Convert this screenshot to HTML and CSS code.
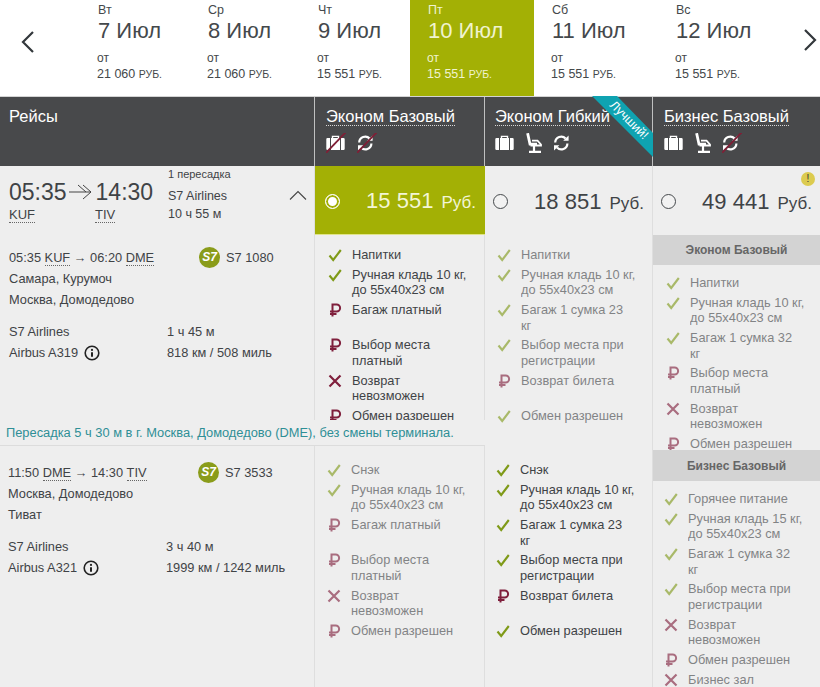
FILE: index.html
```html
<!DOCTYPE html>
<html lang="ru">
<head>
<meta charset="utf-8">
<title>Рейсы</title>
<link rel="stylesheet" href="styles.css">
</head>
<body>
<svg class="defs" aria-hidden="true">
  <defs>
    <symbol id="check" viewBox="0 0 14 14"><path d="M1.5 7.5 5.2 12 12.8 2" fill="none" stroke="currentColor" stroke-width="2.1"/></symbol>
    <symbol id="rub" viewBox="0 0 14 14"><path d="M4.5 13.5V1.5H8.6a3.5 3.5 0 0 1 0 7H2M2 11H8.5" fill="none" stroke="currentColor" stroke-width="2"/></symbol>
    <symbol id="cross" viewBox="0 0 14 14"><path d="M1.5 1.5 12.5 12.5M12.5 1.5 1.5 12.5" fill="none" stroke="currentColor" stroke-width="2.2"/></symbol>
    <symbol id="bag" viewBox="0 0 20 20"><path d="M6.5 5V3.4h6V5" fill="none" stroke="#fff" stroke-width="1.4"/><path d="M1.5 5H4V17H1.5A1.2 1.2 0 0 1 .3 15.8V6.2A1.2 1.2 0 0 1 1.5 5ZM5 5H14V17H5ZM15 5H17.5A1.2 1.2 0 0 1 18.7 6.2V15.8A1.2 1.2 0 0 1 17.5 17H15Z" fill="#fff"/></symbol>
    <symbol id="seat" viewBox="0 0 20 20"><path d="M3.6 .2 6 11.2H13" fill="none" stroke="#fff" stroke-width="2.8"/><path d="M8 7.6H13.5L17 11.5V12.5H6.5" fill="none" stroke="#fff" stroke-width="1.8"/><path d="M10 13V18M5 18.8H17" fill="none" stroke="#fff" stroke-width="2.2"/></symbol>
    <symbol id="sync" viewBox="0 0 20 20"><path d="M2.2 9.5A6 6 0 0 1 12.6 5.6M14.4 10.5A6 6 0 0 1 4 14.4" fill="none" stroke="#fff" stroke-width="2.2"/><path d="M10.2 7.8H15.6V2.6ZM6.4 12.2H1V17.4Z" fill="#fff"/></symbol>
    <symbol id="strike" viewBox="0 0 20 20"><path d="M-2 22 20-1" stroke="#7f1f36" stroke-width="1.8"/></symbol>
    <symbol id="info" viewBox="0 0 16 16"><circle cx="8" cy="8" r="6.8" fill="none" stroke="#222" stroke-width="1.6"/><circle cx="8" cy="4.9" r="1.1" fill="#222"/><path d="M8 7.2V11.8" stroke="#222" stroke-width="2"/></symbol>
  </defs>
</svg>

<nav class="dates">
  <div class="nav-prev"><svg width="14" height="24" viewBox="0 0 14 24"><path d="M12 2 2 12 12 22" fill="none" stroke="#33383c" stroke-width="2.2"/></svg></div>
  <div class="day"><div class="day-name">Вт</div><div class="day-date">7 Июл</div><div class="day-from">от</div><div class="day-price">21 060 <small>РУБ.</small></div></div>
  <div class="day"><div class="day-name">Ср</div><div class="day-date">8 Июл</div><div class="day-from">от</div><div class="day-price">21 060 <small>РУБ.</small></div></div>
  <div class="day"><div class="day-name">Чт</div><div class="day-date">9 Июл</div><div class="day-from">от</div><div class="day-price">15 551 <small>РУБ.</small></div></div>
  <div class="day day-wide day-active"><div class="day-name">Пт</div><div class="day-date">10 Июл</div><div class="day-from">от</div><div class="day-price">15 551 <small>РУБ.</small></div></div>
  <div class="day day-wide"><div class="day-name">Сб</div><div class="day-date">11 Июл</div><div class="day-from">от</div><div class="day-price">15 551 <small>РУБ.</small></div></div>
  <div class="day day-wide"><div class="day-name">Вс</div><div class="day-date">12 Июл</div><div class="day-from">от</div><div class="day-price">15 551 <small>РУБ.</small></div></div>
  <div class="nav-next"><svg width="14" height="24" viewBox="0 0 14 24"><path d="M2 2 12 12 2 22" fill="none" stroke="#33383c" stroke-width="2.2"/></svg></div>
</nav>

<main class="table">
  <div class="head head-flights">Рейсы</div>
  <div class="head">
    <span class="fare-title">Эконом Базовый</span>
    <div class="fare-icons">
      <svg class="ico"><use href="#bag"/><use href="#strike"/></svg>
      <svg class="ico ico-after-bag"><use href="#sync"/><use href="#strike"/></svg>
    </div>
  </div>
  <div class="head head-best">
    <span class="fare-title">Эконом Гибкий</span>
    <div class="fare-icons">
      <svg class="ico"><use href="#bag"/></svg>
      <svg class="ico"><use href="#seat"/></svg>
      <svg class="ico"><use href="#sync"/></svg>
    </div>
    <div class="ribbon"><span class="ribbon-text">Лучший!</span></div>
  </div>
  <div class="head head-last">
    <span class="fare-title">Бизнес Базовый</span>
    <div class="fare-icons">
      <svg class="ico"><use href="#bag"/></svg>
      <svg class="ico"><use href="#seat"/></svg>
      <svg class="ico"><use href="#sync"/><use href="#strike"/></svg>
    </div>
  </div>

  <div class="summary cell">
    <div class="times">
      <div class="times-row"><span>05:35</span>
        <svg class="time-arrow" width="24" height="16" viewBox="0 0 24 16"><path d="M0 8H22M14 1 22 8 14 15M9 1 17 8" fill="none" stroke="#444" stroke-width="1"/></svg>
        <span>14:30</span></div>
      <div class="codes"><span class="code code-from">KUF</span><span class="code">TIV</span></div>
    </div>
    <div class="summary-info">
      <div class="stops">1 пересадка</div>
      <div class="summary-line">S7 Airlines</div>
      <div class="summary-line">10 ч 55 м</div>
    </div>
    <svg class="chevron" width="18" height="10" viewBox="0 0 18 10"><path d="M1 9.5 9 1.5 17 9.5" fill="none" stroke="#444" stroke-width="1.1"/></svg>
  </div>
  <div class="price price-active"><span class="radio radio-on"></span><span class="amount">15 551 <small>Руб.</small></span></div>
  <div class="price cell"><span class="radio"></span><span class="amount">18 851 <small>Руб.</small></span></div>
  <div class="price price-last"><span class="radio"></span><span class="amount">49 441 <small>Руб.</small></span><span class="warn">!</span></div>

  <section class="segment area-seg-1 cell">
    <div class="seg-top"><div class="route">05:35 <span class="code">KUF</span> → 06:20 <span class="code">DME</span></div><span class="logo">S7</span><span>S7 1080</span></div>
    <div>Самара, Курумоч</div>
    <div>Москва, Домодедово</div>
    <div class="seg-meta">
      <div class="meta-col"><div>S7 Airlines</div><div class="plane">Airbus A319 <svg class="info"><use href="#info"/></svg></div></div>
      <div><div>1 ч 45 м</div><div>818 км / 508 миль</div></div>
    </div>
  </section>

  <ul class="feats area-f1a cell inset-37">
    <li class="feat"><svg class="mark ok"><use href="#check"/></svg><span>Напитки</span></li>
    <li class="feat"><svg class="mark ok"><use href="#check"/></svg><span>Ручная кладь 10 кг, до 55x40x23 см</span></li>
    <li class="feat tall"><svg class="mark bad"><use href="#rub"/></svg><span>Багаж платный</span></li>
    <li class="feat"><svg class="mark bad"><use href="#rub"/></svg><span>Выбор места платный</span></li>
    <li class="feat"><svg class="mark bad"><use href="#cross"/></svg><span>Возврат невозможен</span></li>
    <li class="feat"><svg class="mark bad"><use href="#rub"/></svg><span>Обмен разрешен</span></li>
  </ul>
  <ul class="feats area-f1b cell inset-36 dim">
    <li class="feat"><svg class="mark ok"><use href="#check"/></svg><span>Напитки</span></li>
    <li class="feat"><svg class="mark ok"><use href="#check"/></svg><span>Ручная кладь 10 кг, до 55x40x23 см</span></li>
    <li class="feat"><svg class="mark ok"><use href="#check"/></svg><span>Багаж 1 сумка 23 кг</span></li>
    <li class="feat"><svg class="mark ok"><use href="#check"/></svg><span>Выбор места при регистрации</span></li>
    <li class="feat tall"><svg class="mark bad"><use href="#rub"/></svg><span>Возврат билета</span></li>
    <li class="feat"><svg class="mark ok"><use href="#check"/></svg><span>Обмен разрешен</span></li>
  </ul>

  <aside class="fare-stack">
    <h3 class="stack-title">Эконом Базовый</h3>
    <ul class="feats stack-list inset-37 dim">
      <li class="feat"><svg class="mark ok"><use href="#check"/></svg><span>Напитки</span></li>
      <li class="feat"><svg class="mark ok"><use href="#check"/></svg><span>Ручная кладь 10 кг, до 55x40x23 см</span></li>
      <li class="feat"><svg class="mark ok"><use href="#check"/></svg><span>Багаж 1 сумка 32 кг</span></li>
      <li class="feat"><svg class="mark bad"><use href="#rub"/></svg><span>Выбор места платный</span></li>
      <li class="feat"><svg class="mark bad"><use href="#cross"/></svg><span>Возврат невозможен</span></li>
      <li class="feat"><svg class="mark bad"><use href="#rub"/></svg><span>Обмен разрешен</span></li>
    </ul>
    <h3 class="stack-title stack-title-2">Бизнес Базовый</h3>
    <ul class="feats stack-list-2 inset-35 dim">
      <li class="feat"><svg class="mark ok"><use href="#check"/></svg><span>Горячее питание</span></li>
      <li class="feat"><svg class="mark ok"><use href="#check"/></svg><span>Ручная кладь 15 кг, до 55x40x23 см</span></li>
      <li class="feat"><svg class="mark ok"><use href="#check"/></svg><span>Багаж 1 сумка 32 кг</span></li>
      <li class="feat"><svg class="mark ok"><use href="#check"/></svg><span>Выбор места при регистрации</span></li>
      <li class="feat"><svg class="mark bad"><use href="#cross"/></svg><span>Возврат невозможен</span></li>
      <li class="feat"><svg class="mark bad"><use href="#rub"/></svg><span>Обмен разрешен</span></li>
      <li class="feat"><svg class="mark bad"><use href="#cross"/></svg><span>Бизнес зал</span></li>
    </ul>
  </aside>

  <div class="transfer">Пересадка 5 ч 30 м в г. Москва, Домодедово (DME), без смены терминала.</div>

  <section class="segment segment-2 cell">
    <div class="seg-top"><div class="route">11:50 <span class="code">DME</span> → 14:30 <span class="code">TIV</span></div><span class="logo">S7</span><span>S7 3533</span></div>
    <div>Москва, Домодедово</div>
    <div>Тиват</div>
    <div class="seg-meta">
      <div class="meta-col"><div>S7 Airlines</div><div class="plane">Airbus A321 <svg class="info"><use href="#info"/></svg></div></div>
      <div><div>3 ч 40 м</div><div>1999 км / 1242 миль</div></div>
    </div>
  </section>
  <ul class="feats feats-2 area-f2a cell inset-36 dim">
    <li class="feat"><svg class="mark ok"><use href="#check"/></svg><span>Снэк</span></li>
    <li class="feat"><svg class="mark ok"><use href="#check"/></svg><span>Ручная кладь 10 кг, до 55x40x23 см</span></li>
    <li class="feat tall"><svg class="mark bad"><use href="#rub"/></svg><span>Багаж платный</span></li>
    <li class="feat"><svg class="mark bad"><use href="#rub"/></svg><span>Выбор места платный</span></li>
    <li class="feat"><svg class="mark bad"><use href="#cross"/></svg><span>Возврат невозможен</span></li>
    <li class="feat"><svg class="mark bad"><use href="#rub"/></svg><span>Обмен разрешен</span></li>
  </ul>
  <ul class="feats feats-2 area-f2b cell inset-35">
    <li class="feat"><svg class="mark ok"><use href="#check"/></svg><span>Снэк</span></li>
    <li class="feat"><svg class="mark ok"><use href="#check"/></svg><span>Ручная кладь 10 кг, до 55x40x23 см</span></li>
    <li class="feat"><svg class="mark ok"><use href="#check"/></svg><span>Багаж 1 сумка 23 кг</span></li>
    <li class="feat"><svg class="mark ok"><use href="#check"/></svg><span>Выбор места при регистрации</span></li>
    <li class="feat tall"><svg class="mark bad"><use href="#rub"/></svg><span>Возврат билета</span></li>
    <li class="feat"><svg class="mark ok"><use href="#check"/></svg><span>Обмен разрешен</span></li>
  </ul>
</main>
</body>
</html>
```

FILE: styles.css
```css
* { box-sizing: border-box; }

html, body {
  margin: 0;
  height: 687px;
  overflow: hidden;
}

body {
  background: #eeeeee;
  color: #3f4346;
  font-family: "Liberation Sans", Arial, sans-serif;
  font-size: 13px;
}

.defs { display: none; }

/* Date strip */
.dates {
  display: flex;
  height: 97px;
  background: #fff;
  border-bottom: 1px solid #d4d4d4;
}
.nav-prev {
  width: 80px;
  flex: none;
  padding: 30px 0 0 21px;
}
.nav-next {
  flex: 1;
  padding: 28px 0 0 21px;
}
.day {
  width: 110px;
  flex: none;
  padding: 3px 0 0 17px;
  color: #44484b;
}
.day-wide { width: 124px; }
.day-active { background: #a3b005; color: #f0f3cf; }
.day-name { font-size: 12.5px; line-height: 14px; padding-left: 1px; }
.day-date { font-size: 22px; line-height: 27px; padding-left: 1px; }
.day-from { font-size: 12px; line-height: 14px; margin-top: 7px; }
.day-price { font-size: 12.5px; line-height: 14px; margin-top: 2px; }
.day-price small { font-size: 10.5px; }

/* Table */
.table {
  display: grid;
  grid-template-columns: 315px 170px 168px 167px;
  grid-template-rows: 69px 69px 185px 26px 241px;
  height: 590px;
}
.cell { box-shadow: inset -1px 0 #dedede; }

.head {
  background: #48494b;
  color: #fff;
  padding: 10px 0 0 11px;
  font-size: 16.5px;
  box-shadow: inset -1px 0 #bfc0c0;
  position: relative;
}
.head-flights { padding-left: 9px; line-height: 18px; }
.head-last { box-shadow: none; }
.head-best { padding-left: 10px; }
.fare-title {
  display: inline-block;
  line-height: 18px;
  border-bottom: 1px dotted #d8d8d8;
}
.fare-icons { display: flex; gap: 9px; margin-top: 7px; }
.ico { width: 20px; height: 20px; overflow: visible; }
.ico-after-bag { margin-left: 2px; }

.ribbon {
  position: absolute;
  top: -1px;
  right: 0;
  width: 61px;
  height: 61px;
  background: #0fa3b1;
  clip-path: polygon(0 0, 25px 0, 61px 37px, 61px 61px);
}
.ribbon-text {
  position: absolute;
  left: 37px;
  top: 24px;
  color: #fff;
  font-size: 12.5px;
  line-height: 14px;
  white-space: nowrap;
  transform: translate(-50%, -50%) rotate(45deg);
}

/* Summary row */
.summary { display: flex; position: relative; padding-left: 9px; }
.times { width: 159px; flex: none; padding-top: 12px; }
.times-row {
  display: flex;
  align-items: center;
  font-size: 23px;
  line-height: 28px;
}
.time-arrow { margin: 0 3px 0 2px; flex: none; }
.codes { display: flex; line-height: 15px; margin-top: 2px; font-size: 13px; }
.code { border-bottom: 1px dotted #666; line-height: 14px; display: inline-block; }
.code-from { margin-right: 60px; }
.summary-info { padding-top: 1px; font-size: 12.5px; }
.stops { font-size: 11px; line-height: 14px; }
.summary-line { line-height: 16px; margin-top: 2px; }
.stops + .summary-line { margin-top: 7px; }
.chevron { position: absolute; left: 289px; top: 24px; }

.price {
  display: flex;
  align-items: center;
  padding: 2px 9px 0 8px;
  position: relative;
  color: #3f4346;
}
.price-active {
  background: #a3b005;
  color: #f3f6d6;
  border-bottom: 1px solid #e0e48a;
  padding-left: 10px;
}
.price-last { padding-right: 8px; }
.amount {
  margin-left: auto;
  font-size: 22px;
  white-space: nowrap;
}
.amount small { font-size: 17px; margin-left: 2px; }
.radio {
  width: 15px;
  height: 15px;
  flex: none;
  border: 1px solid #45494c;
  border-radius: 50%;
  background: #f2f2f2;
}
.radio-on {
  border-color: #fff;
  background: #fff;
  box-shadow: inset 0 0 0 2px #a3b005;
}
.warn {
  position: absolute;
  right: 5px;
  top: 6px;
  width: 14px;
  height: 14px;
  border-radius: 50%;
  background: #dccb4f;
  color: #333;
  font-size: 10px;
  line-height: 14px;
  text-align: center;
}

/* Segments */
.segment {
  padding: 12px 0 0 9px;
  line-height: 21px;
  font-size: 12.8px;
  overflow: hidden;
}
.area-seg-1 { grid-column: 1; grid-row: 3; }
.segment-2 {
  grid-column: 1;
  grid-row: 5;
  padding: 16px 0 0 8px;
}
.seg-top { display: flex; align-items: center; }
.route { width: 190px; flex: none; }
.logo {
  width: 21px;
  height: 21px;
  flex: none;
  margin-right: 6px;
  border-radius: 50%;
  background: #8a9c1a;
  color: #fff;
  font-size: 12px;
  font-weight: bold;
  font-style: italic;
  line-height: 21px;
  text-align: center;
}
.seg-meta { display: flex; margin-top: 11px; }
.meta-col { width: 158px; flex: none; }
.plane { display: flex; align-items: center; gap: 6px; }
.info { width: 16px; height: 16px; }

/* Fare feature lists */
.feats {
  list-style: none;
  margin: 0;
  padding: 12px 0 0;
  overflow: hidden;
  line-height: 15.5px;
  font-size: 12.8px;
}
.feats-2 { padding-top: 16px; }
.area-f1a { grid-column: 2; grid-row: 3; }
.area-f1b { grid-column: 3; grid-row: 3 / span 2; }
.area-f2a { grid-column: 2; grid-row: 5; }
.area-f2b { grid-column: 3; grid-row: 5; }
.inset-37 { padding-left: 13px; }
.inset-36 { padding-left: 12px; }
.inset-35 { padding-left: 11px; }
.dim .feat > * { opacity: 0.62; }
.feat {
  display: flex;
  gap: 10px;
  margin-bottom: 4.3px;
}
.feat span { width: 115px; }
.tall { min-height: 31px; }
.mark { width: 14px; height: 14px; flex: none; margin-top: 1px; }
.ok { color: #7f9a18; }
.bad { color: #7f1f3c; }

.fare-stack {
  grid-column: 4;
  grid-row: 3 / span 3;
  overflow: hidden;
}
.stack-title {
  margin: 0;
  height: 30px;
  background: #d3d3d3;
  color: #666;
  font-size: 12px;
  font-weight: bold;
  line-height: 31px;
  text-align: center;
}
.stack-title-2 { height: 31px; line-height: 32px; }
.stack-list { height: 185px; padding-top: 10px; }
.stack-list-2 { padding-top: 10px; }

.transfer {
  grid-column: 1 / span 2;
  grid-row: 4;
  color: #2e8f96;
  font-size: 12.85px;
  line-height: 25px;
  padding-left: 6px;
  border-bottom: 1px solid #dcdcdc;
}
```
